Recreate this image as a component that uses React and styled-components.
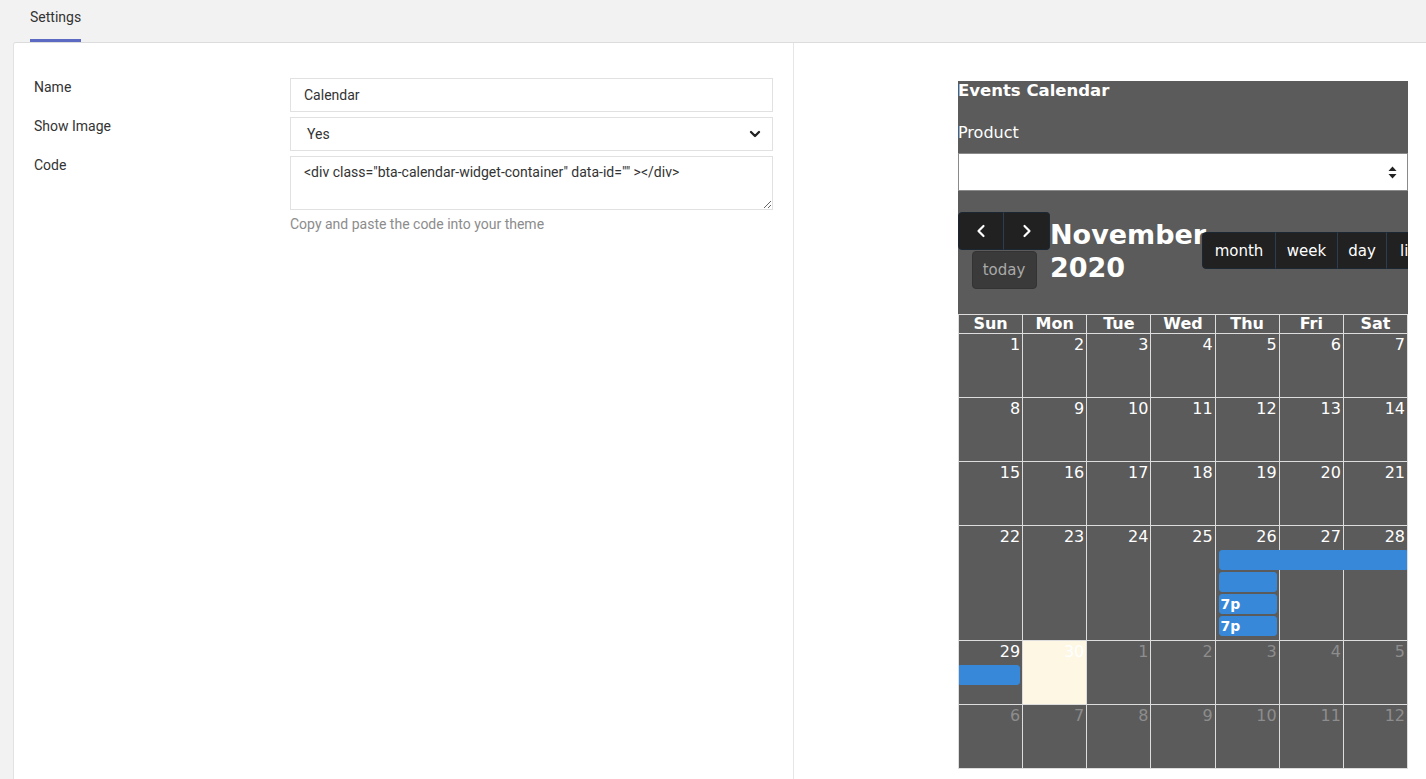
import React from 'react';
import styled, { createGlobalStyle } from 'styled-components';
import { ChevronLeft, ChevronRight, ChevronDown } from 'lucide-react';

const GlobalStyle = createGlobalStyle`
    html, body {
        margin: 0;
        padding: 0;
        background: #f2f2f2;
        font-family: Roboto, 'Noto Sans', sans-serif;
        color: #333;
    }
    * { box-sizing: border-box; }
`

const Page = styled.div`
    min-height: 100vh;
    display: flex;
    flex-direction: column;
`
const TabBar = styled.div`
    height: 42px;
    display: flex;
    padding-left: 30px;
`
const Tab = styled.div`
    font-size: 14px;
    line-height: 34px;
    color: #333;
    border-bottom: 3px solid #5c6ac4;
    height: 42px;
`
const Main = styled.div`
    flex: 1;
    display: flex;
    margin-left: 13px;
    background: #fff;
    border-top: 1px solid #dcdcdc;
    border-left: 1px solid #e2e2e2;
    border-top-left-radius: 3px;
`
const FormPane = styled.div`
    width: 780px;
    flex: none;
    border-right: 1px solid #e6e6e6;
    padding: 35px 20px 0 20px;
`
const Form = styled.div`
    display: grid;
    grid-template-columns: 256px 1fr;
    row-gap: 5px;
`
const Label = styled.div`
    font-size: 14px;
    line-height: 18px;
    color: #333;
`
const Field = styled.div`
    display: flex;
    flex-direction: column;
`
const TextInput = styled.div`
    height: 34px;
    border: 1px solid #e1e1e1;
    padding: 0 ${p => p.$indent || 13}px;
    display: flex;
    align-items: center;
    justify-content: space-between;
    font-size: 14px;
    color: #333;
    svg { margin-right: -7px; }
`
const CodeArea = styled.textarea`
    height: 54px;
    border: 1px solid #e1e1e1;
    padding: 7px 13px;
    font-family: Roboto, sans-serif;
    font-size: 14px;
    line-height: 17px;
    color: #333;
    resize: vertical;
    outline: none;
    border-radius: 0;
`
const Help = styled.div`
    margin-top: 6px;
    font-size: 14px;
    line-height: 17px;
    color: #8c8c8c;
`
const PreviewPane = styled.div`
    flex: 1;
    padding: 38px 0 10px 164px;
`
const Widget = styled.div`
    width: 450px;
    background: #5b5b5b;
    color: #fff;
    overflow: hidden;
    font-family: 'DejaVu Sans', Verdana, sans-serif;
`
const WidgetTitle = styled.div`
    font-size: 16.5px;
    font-weight: bold;
    line-height: 19px;
    margin-bottom: 24px;
`
const FieldLabel = styled.div`
    font-size: 16px;
    line-height: 18px;
    margin-bottom: 11px;
`
const ProductSelect = styled.div`
    height: 38px;
    background: #fff;
    border: 1px solid #8a8a8a;
    display: flex;
    align-items: center;
    justify-content: flex-end;
    padding-right: 10px;
    margin-bottom: 21px;
`
const Toolbar = styled.div`
    display: flex;
    align-items: center;
    margin-bottom: 25px;
`
const NavChunk = styled.div`
    width: 92px;
    flex: none;
    display: flex;
    flex-direction: column;
    align-items: center;
    gap: 1px;
`
const ButtonGroup = styled.div`
    display: flex;
    flex: none;
`
const Button = styled.div`
    height: ${p => p.$h || 38}px;
    width: ${p => p.$w}px;
    display: flex;
    align-items: center;
    justify-content: center;
    background: ${p => (p.$muted ? '#3a3a3a' : '#212121')};
    color: ${p => (p.$muted ? '#a9a9a9' : '#fff')};
    border: 1px solid ${p => (p.$muted ? '#333' : '#1b2733')};
    font-size: 15px;
    white-space: nowrap;
    flex: none;
    &:first-child { border-top-left-radius: 4px; border-bottom-left-radius: 4px; }
    &:last-child { border-top-right-radius: 4px; border-bottom-right-radius: 4px; }
    & + & { margin-left: -1px; border-left-color: #2c3e50; }
`
const TitleChunk = styled.div`
    width: 152px;
    flex: none;
`
const Title = styled.h2`
    margin: 0;
    font-size: 27px;
    line-height: 33px;
    font-weight: bold;
    width: 152px;
`
const ViewChunk = styled.div`
    flex: none;
    position: relative;
    z-index: 1;
`
const Month = styled.div`
    background: #dddddd;
    padding: 1px;
    display: flex;
    flex-direction: column;
    gap: 1px;
`
const HeaderRow = styled.div`
    display: grid;
    grid-template-columns: repeat(7, 1fr);
    column-gap: 1px;
`
const HeaderCell = styled.div`
    background: #5b5b5b;
    text-align: center;
    font-weight: bold;
    font-size: 16px;
    line-height: 18px;
`
const WeekRow = styled.div`
    display: grid;
    grid-template-columns: repeat(7, 1fr);
    grid-template-rows: 24px repeat(${p => p.$events}, 22px) minmax(2px, 1fr);
    column-gap: 1px;
    min-height: 63px;
`
const DayCell = styled.div`
    grid-row: 1 / -1;
    background: ${p => (p.$today ? '#fdf7e3' : '#5b5b5b')};
    color: ${p => (p.$other ? '#8d8d8d' : '#fff')};
    text-align: right;
    padding: 1px 2px 0 0;
    font-size: 16px;
    line-height: 20px;
`
const Event = styled.div`
    height: 20px;
    margin: 0 ${p => (p.$contRight ? 0 : 2)}px 2px ${p => (p.$contLeft ? 0 : 3)}px;
    background: #3788d8;
    border: 1px solid #3788d8;
    border-radius: ${p => (p.$contLeft ? 0 : 3)}px ${p => (p.$contRight ? 0 : 3)}px ${p => (p.$contRight ? 0 : 3)}px ${p => (p.$contLeft ? 0 : 3)}px;
    color: #fff;
    font-size: 14px;
    font-weight: bold;
    line-height: 18px;
    padding-left: 1px;
    position: relative;
    z-index: 1;
`

const days = ['Sun', 'Mon', 'Tue', 'Wed', 'Thu', 'Fri', 'Sat'];

const weeks = [
    { dates: [1, 2, 3, 4, 5, 6, 7], events: [] },
    { dates: [8, 9, 10, 11, 12, 13, 14], events: [] },
    { dates: [15, 16, 17, 18, 19, 20, 21], events: [] },
    {
        dates: [22, 23, 24, 25, 26, 27, 28],
        events: [
            { start: 5, end: 8, row: 0, contRight: true },
            { start: 5, end: 6, row: 1 },
            { start: 5, end: 6, row: 2, text: '7p' },
            { start: 5, end: 6, row: 3, text: '7p' },
        ],
    },
    {
        dates: [29, 30, 1, 2, 3, 4, 5],
        other: [2, 3, 4, 5, 6],
        today: 1,
        events: [{ start: 1, end: 2, row: 0, contLeft: true }],
    },
    { dates: [6, 7, 8, 9, 10, 11, 12], other: [0, 1, 2, 3, 4, 5, 6], events: [] },
];

const UpDown = () => (
    <svg width="9" height="13" viewBox="0 0 9 13">
        <path d="M4.5 0.5 L8.5 5 H0.5 Z" fill="#222" />
        <path d="M4.5 12.5 L8.5 8 H0.5 Z" fill="#222" />
    </svg>
);

const App = () => {
    return (
        <Page>
            <GlobalStyle />
            <TabBar>
                <Tab>Settings</Tab>
            </TabBar>
            <Main>
                <FormPane>
                    <Form>
                        <Label>Name</Label>
                        <TextInput>Calendar</TextInput>

                        <Label>Show Image</Label>
                        <TextInput $indent={16}>
                            <span>Yes</span>
                            <ChevronDown size={16} strokeWidth={3.5} color="#222" />
                        </TextInput>

                        <Label>Code</Label>
                        <Field>
                            <CodeArea
                                readOnly
                                value={'<div class="bta-calendar-widget-container" data-id="" ></div>'}
                            />
                            <Help>Copy and paste the code into your theme</Help>
                        </Field>
                    </Form>
                </FormPane>
                <PreviewPane>
                    <Widget>
                        <WidgetTitle>Events Calendar</WidgetTitle>
                        <FieldLabel>Product</FieldLabel>
                        <ProductSelect>
                            <UpDown />
                        </ProductSelect>
                        <Toolbar>
                            <NavChunk>
                                <ButtonGroup>
                                    <Button $w={46}>
                                        <ChevronLeft size={20} strokeWidth={2.6} />
                                    </Button>
                                    <Button $w={47}>
                                        <ChevronRight size={20} strokeWidth={2.6} />
                                    </Button>
                                </ButtonGroup>
                                <ButtonGroup>
                                    <Button $muted $w={65}>today</Button>
                                </ButtonGroup>
                            </NavChunk>
                            <TitleChunk>
                                <Title>November 2020</Title>
                            </TitleChunk>
                            <ViewChunk>
                                <ButtonGroup>
                                    <Button $h={37} $w={74}>month</Button>
                                    <Button $h={37} $w={63}>week</Button>
                                    <Button $h={37} $w={50}>day</Button>
                                    <Button $h={37} $w={50}>list</Button>
                                </ButtonGroup>
                            </ViewChunk>
                        </Toolbar>
                        <Month>
                            <HeaderRow>
                                {days.map(d => (
                                    <HeaderCell key={d}>{d}</HeaderCell>
                                ))}
                            </HeaderRow>
                            {weeks.map((week, wi) => (
                                <WeekRow key={wi} $events={week.events.length}>
                                    {week.dates.map((date, di) => (
                                        <DayCell
                                            key={di}
                                            style={{ gridColumn: di + 1 }}
                                            $other={week.other && week.other.includes(di)}
                                            $today={week.today === di}
                                        >
                                            {date}
                                        </DayCell>
                                    ))}
                                    {week.events.map((ev, ei) => (
                                        <Event
                                            key={'e' + ei}
                                            style={{ gridColumn: `${ev.start} / ${ev.end}`, gridRow: ev.row + 2 }}
                                            $contLeft={ev.contLeft}
                                            $contRight={ev.contRight}
                                        >
                                            {ev.text}
                                        </Event>
                                    ))}
                                </WeekRow>
                            ))}
                        </Month>
                    </Widget>
                </PreviewPane>
            </Main>
        </Page>
    );
};

export default App;
